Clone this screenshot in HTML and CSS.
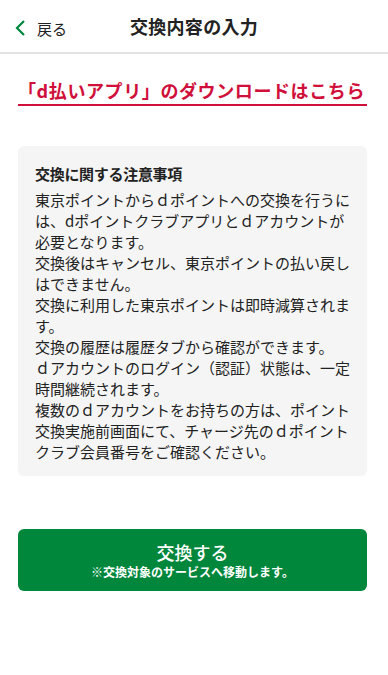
FILE: index.html
```html
<!DOCTYPE html>
<html lang="ja">
<head>
<meta charset="utf-8">
<link rel="stylesheet" href="styles.css">
</head>
<body>
<header class="header">
  <a class="back" href="#">
    <svg class="back-icon" width="11" height="16" viewBox="0 0 11 16"><path d="M9 1 L2 8 L9 15" fill="none" stroke="#00873c" stroke-width="2.2"/></svg>
    <span>戻る</span>
  </a>
  <h1 class="title">交換内容の入力</h1>
</header>
<main class="main">
  <a class="dl-link" href="#">「d払いアプリ」のダウンロードはこちら</a>
  <section class="notice">
    <h2 class="notice-title">交換に関する注意事項</h2>
    <p class="notice-text">東京ポイントからｄポイントへの交換を行うには、dポイントクラブアプリとｄアカウントが必要となります。<br>交換後はキャンセル、東京ポイントの払い戻しはできません。<br>交換に利用した東京ポイントは即時減算されます。<br>交換の履歴は履歴タブから確認ができます。<br>ｄアカウントのログイン（認証）状態は、一定時間継続されます。<br>複数のｄアカウントをお持ちの方は、ポイント交換実施前画面にて、チャージ先のｄポイントクラブ会員番号をご確認ください。</p>
  </section>
  <button class="exchange-btn" type="button">
    <span class="btn-main">交換する</span>
    <span class="btn-sub">※交換対象のサービスへ移動します。</span>
  </button>
</main>
</body>
</html>
```
FILE: styles.css
```css
* { box-sizing: border-box; }
html, body { margin: 0; padding: 0; background: #fff; }
body {
  font-family: "Noto Sans CJK JP", "Noto Sans", sans-serif;
  color: #222;
  width: 388px;
}
.header {
  position: relative;
  height: 54px;
  border-bottom: 2px solid #e2e2e2;
  display: flex;
  align-items: center;
  justify-content: center;
}
.back {
  position: absolute;
  left: 15px;
  top: 0;
  height: 56px;
  display: flex;
  align-items: center;
  gap: 11px;
  color: #222;
  text-decoration: none;
  font-size: 15px;
}
.back-icon { display: block; }
.title {
  margin: 0;
  font-size: 18px;
  font-weight: 700;
  line-height: 1;
  letter-spacing: 0.3px;
}
.main {
  padding: 0 21px 0 18px;
  display: flex;
  flex-direction: column;
}
.dl-link {
  margin-top: 23px;
  align-self: flex-start;
  color: #d0103a;
  font-size: 18px;
  font-weight: 700;
  line-height: 26px;
  letter-spacing: 0.6px;
  text-decoration: none;
  border-bottom: 2px solid #d0103a;
  padding-bottom: 1px;
  width: 349px;
  white-space: nowrap;
}
.notice {
  margin-top: 40px;
  background: #f5f5f5;
  border-radius: 6px;
  padding: 17px 14px 14px 17px;
}
.notice-title {
  margin: 0 0 4px;
  font-size: 15px;
  font-weight: 700;
  line-height: 22px;
  letter-spacing: -0.3px;
}
.notice-text {
  margin: 0;
  font-size: 15px;
  line-height: 21px;
  color: #222;
}
.exchange-btn {
  margin-top: 53px;
  width: 349px;
  height: 62px;
  border: none;
  border-radius: 6px;
  background: #00873c;
  color: #fff;
  font-family: inherit;
  display: flex;
  flex-direction: column;
  align-items: center;
  justify-content: flex-start;
  padding: 12px 0 0;
}
.btn-main {
  font-size: 18px;
  font-weight: 500;
  line-height: 23px;
}
.btn-sub {
  font-size: 12px;
  font-weight: 700;
  line-height: 16px;
}
```
